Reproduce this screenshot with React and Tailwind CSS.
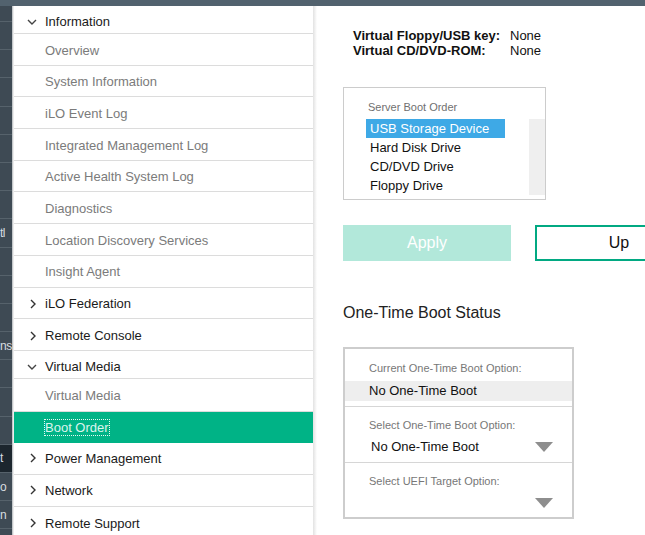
import React from "react";

const font = { fontFamily: '"Liberation Sans", Arial, sans-serif' };

const ChevronDown = () => (
  <svg width="10" height="6" viewBox="0 0 10 6" className="block">
    <path d="M1 1 L5 5 L9 1" fill="none" stroke="#444" strokeWidth="1.4" />
  </svg>
);

const ChevronRight = () => (
  <svg width="6" height="10" viewBox="0 0 6 10" className="block">
    <path d="M1 1 L5 5 L1 9" fill="none" stroke="#333" strokeWidth="1.4" />
  </svg>
);

const Triangle = () => (
  <svg width="18" height="10" viewBox="0 0 18 10" className="block">
    <polygon points="0,0 18,0 9,10" fill="#8e8e8e" />
  </svg>
);

const nav = [
  { label: "Information", type: "open", h: "h-[28px]" },
  { label: "Overview", type: "sub", h: "h-[31.7px]" },
  { label: "System Information", type: "sub", h: "h-[31.7px]" },
  { label: "iLO Event Log", type: "sub", h: "h-[31.7px]" },
  { label: "Integrated Management Log", type: "sub", h: "h-[31.7px]" },
  { label: "Active Health System Log", type: "sub", h: "h-[31.7px]" },
  { label: "Diagnostics", type: "sub", h: "h-[31.7px]" },
  { label: "Location Discovery Services", type: "sub", h: "h-[31.7px]" },
  { label: "Insight Agent", type: "sub", h: "h-[31.7px]" },
  { label: "iLO Federation", type: "closed", h: "h-[31.7px]" },
  { label: "Remote Console", type: "closed", h: "h-[31.7px]" },
  { label: "Virtual Media", type: "open", h: "h-[28px]" },
  { label: "Virtual Media", type: "sub", h: "h-[33px]" },
  { label: "Boot Order", type: "active", h: "h-[31px]" },
  { label: "Power Management", type: "closed", h: "h-[32px]", flat: true },
  { label: "Network", type: "closed", h: "h-[32px]", flat: true },
  { label: "Remote Support", type: "closed", h: "h-[32px]" },
];

const strip = [
  { t: "", h: "h-[16px]" },
  { t: "" }, { t: "" }, { t: "" }, { t: "" }, { t: "" }, { t: "" }, { t: "" },
  { t: "tl" },
  { t: "" }, { t: "" }, { t: "" },
  { t: "ns" },
  { t: "" }, { t: "" }, { t: "" },
  { t: "t", dark: true },
  { t: "o" },
  { t: "n" },
];

function NavRow({ item }) {
  if (item.type === "active") {
    return (
      <div className={`${item.h} shrink-0 flex items-center pl-[31px] bg-[#00b386]`}>
        <span className="text-[13px] leading-[15px] text-[#dcf5ee] outline-1 outline-dotted outline-[#e8f8f3]">
          {item.label}
        </span>
      </div>
    );
  }
  if (item.type === "sub") {
    return (
      <div className={`${item.h} shrink-0 flex items-center pl-[31px] pt-[2px] border-b border-[#dcdcdc]`}>
        <span className="text-[13px] text-[#7b7b7b]">{item.label}</span>
      </div>
    );
  }
  return (
    <div
      className={`${item.h} shrink-0 flex items-center pl-[13px] border-b border-[#dcdcdc] ${
        item.type === "open" ? "pt-[5px]" : item.flat ? "" : "pt-[2px]"
      }`}
    >
      <div className="w-[18px] flex items-center">
        {item.type === "open" ? (
          <ChevronDown />
        ) : (
          <span className="pl-[3px]">
            <ChevronRight />
          </span>
        )}
      </div>
      <span className="text-[13px] text-[#1a1a1a]">{item.label}</span>
    </div>
  );
}

export default function App() {
  return (
    <div style={font} className="w-[645px] h-[535px] overflow-hidden bg-white flex flex-col">
      <div className="h-[6px] shrink-0 bg-[#52626e]" />
      <div className="flex flex-1 min-h-0">
        {/* left dark strip */}
        <div className="w-[12px] shrink-0 bg-[#3e4a54] flex flex-col overflow-hidden">
          {strip.map((s, i) => (
            <div
              key={i}
              className={`${s.h || "h-[28.2px]"} shrink-0 border-b border-[#56626b] flex items-center overflow-hidden whitespace-nowrap text-[12px] tracking-[-0.5px] text-[#d8dde0] ${
                s.dark ? "bg-[#1c262e]" : ""
              }`}
            >
              {s.t}
            </div>
          ))}
        </div>
        <div className="w-[1px] shrink-0 bg-[#c4c8cb]" />
        <div className="w-[1px] shrink-0 bg-[#ececec]" />

        {/* sidebar */}
        <div className="w-[299px] shrink-0 flex flex-col bg-white">
          {nav.map((item, i) => (
            <NavRow key={i} item={item} />
          ))}
        </div>
        <div className="w-[4px] shrink-0 bg-gradient-to-r from-[#e2e2e2] to-white" />

        {/* main */}
        <div className="flex-1 flex flex-col pl-[26px] pt-[22px]">
          <div className="pl-[10px] text-[13px] leading-[15px] text-[#111]">
            <div className="flex">
              <span className="w-[157px] font-bold">Virtual Floppy/USB key:</span>
              <span>None</span>
            </div>
            <div className="flex">
              <span className="w-[157px] font-bold">Virtual CD/DVD-ROM:</span>
              <span>None</span>
            </div>
          </div>

          <div className="mt-[29px] w-[203px] h-[113px] border border-[#cccccc] flex flex-col">
            <div className="pl-[24px] pt-[13px] text-[11px] leading-[13px] text-[#707070]">
              Server Boot Order
            </div>
            <div className="flex mt-[5px] pl-[22px]">
              <div className="w-[139px] flex flex-col text-[13px] text-[#111]">
                <div className="h-[19px] flex items-center pl-[4px] bg-[#3ea9e6] text-white">
                  USB Storage Device
                </div>
                <div className="h-[19px] flex items-center pl-[4px]">Hard Disk Drive</div>
                <div className="h-[19px] flex items-center pl-[4px]">CD/DVD Drive</div>
                <div className="h-[19px] flex items-center pl-[4px]">Floppy Drive</div>
              </div>
              <div className="ml-auto w-[16px] h-[76px] bg-[#efefef]" />
            </div>
          </div>

          <div className="flex gap-[24px] mt-[25px]">
            <button className="w-[168px] h-[36px] shrink-0 bg-[#b2e8da] text-white text-[16px]">
              Apply
            </button>
            <button className="w-[168px] h-[36px] shrink-0 border-2 border-[#01a982] text-[#111] text-[16px]">
              Up
            </button>
          </div>

          <div className="mt-[43px] text-[16px] leading-[18px] text-[#222]">One-Time Boot Status</div>

          <div className="mt-[25px] w-[231px] h-[172px] border-2 border-[#cdcdcd] flex flex-col">
            <div className="h-[58px] shrink-0 border-b border-[#d6d6d6] flex flex-col">
              <div className="pl-[24px] pt-[13px] text-[11px] leading-[13px] text-[#777]">
                Current One-Time Boot Option:
              </div>
              <div className="mt-[6px] h-[20px] bg-[#eeeeee] pl-[24px] flex items-center text-[13px] text-[#111]">
                No One-Time Boot
              </div>
            </div>
            <div className="h-[56px] shrink-0 border-b border-[#d6d6d6] flex flex-col">
              <div className="pl-[24px] pt-[12px] text-[11px] leading-[13px] text-[#777]">
                Select One-Time Boot Option:
              </div>
              <div className="mt-[6px] h-[18px] pl-[26px] pr-[19px] flex items-center justify-between text-[13px] text-[#111]">
                <span>No One-Time Boot</span>
                <Triangle />
              </div>
            </div>
            <div className="flex-1 flex flex-col">
              <div className="pl-[24px] pt-[12px] text-[11px] leading-[13px] text-[#777]">
                Select UEFI Target Option:
              </div>
              <div className="mt-[6px] h-[18px] pl-[26px] pr-[19px] flex items-center justify-end">
                <Triangle />
              </div>
            </div>
          </div>
        </div>
      </div>
    </div>
  );
}
